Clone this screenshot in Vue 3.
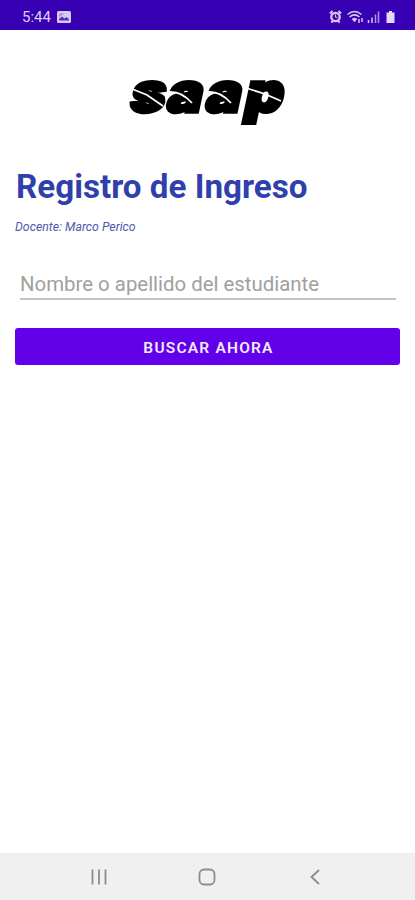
<script setup>
import { ref } from 'vue'

const time = ref('5:44')
const teacher = ref('Marco Perico')
const search = ref('')
</script>

<template>
  <div class="screen">
    <header class="statusbar">
      <span class="time">{{ time }}</span>
      <svg class="picture" width="14" height="12" viewBox="0 0 14 12">
        <rect width="14" height="12" rx="1.500" fill="#d9c9f4" />
        <path d="M2 9.500V8l3-2.500 2.500 2L9.500 6 12 8.200v1.300z" fill="#5a2fc0" />
        <path d="M2 2.500h6L5 4 2 6z" fill="#8a69d6" opacity=".6" />
      </svg>
      <svg class="status-icons" width="70" height="16" viewBox="0 0 70 16">
        <g fill="none" stroke="#d6c8f2">
          <circle cx="6.500" cy="8" r="4.200" stroke-width="2.300" />
          <path d="M1 4.500L3.500 2M12 4.500L9.500 2M2.300 13.500l1.500-1.500M10.700 13.500L9.200 12" stroke-width="2" />
          <path d="M6.500 5.500V8.300h2" stroke-width="1" />
          <path d="M18.500 5.500q7-6 14 0M20.500 8q5-4.200 10 0" stroke-width="1.500" />
          <path d="M23 10q2.500-2 5 0l-2.500 3z" fill="#d6c8f2" stroke-width=".5" />
          <path d="M30 10v4M33 9v4" stroke-width="1.500" />
          <path d="M39.500 11v3M43 8.500v5.500" stroke-width="1.500" />
          <path d="M46.500 5.500V14M49.500 2.500V14" stroke-width="1.500" opacity=".75" />
        </g>
        <path d="M57.500 3.500h2.500V2h3v1.500h2.500V14h-8z" fill="#e4daf7" />
      </svg>
    </header>

    <main class="content">
      <svg class="logo" width="160" height="54" viewBox="0 0 160 54">
        <g transform="translate(1 37.500) skewX(-12) scale(1.08 1)">
          <text class="logo-text" x="0 34 70 106" y="0">saap</text>
        </g>
        <g class="cuts">
          <path d="M4 14.500L20 21l16 11" />
          <path d="M42 18q12-1 23 11" />
          <path d="M81 18q12-1 23 11" />
          <path d="M119 14l19 6 16 7" />
        </g>
      </svg>

      <h1 class="title">Registro de Ingreso</h1>
      <p class="teacher">Docente: {{ teacher }}</p>
      <input v-model="search" class="search" type="text" placeholder="Nombre o apellido del estudiante">
      <button class="searchbtn">BUSCAR AHORA</button>
    </main>

    <footer class="navbar">
      <svg width="16" height="16" viewBox="0 0 16 16">
        <path d="M1.500 .5v15M8 .5v15M14.500 .5v15" />
      </svg>
      <svg width="18" height="18" viewBox="0 0 18 18">
        <rect x="1.500" y="1.500" width="15" height="15" rx="4.500" />
      </svg>
      <svg width="16" height="16" viewBox="0 0 16 16">
        <path d="M12 1L4.500 8l7.500 7" />
      </svg>
    </footer>
  </div>
</template>

<style>
body {
  margin: 0;
}
</style>

<style scoped>
.screen {
  display: flex;
  flex-direction: column;
  height: 900px;
  background: #fff;
  font-family: Roboto, "Liberation Sans", sans-serif;
}
.statusbar {
  display: flex;
  align-items: center;
  box-sizing: border-box;
  height: 30px;
  padding: 3px 16px 0 22px;
  background: #3700b3;
}
.time {
  width: 35px;
  color: #dccff5;
  font-size: 15px;
}
.status-icons {
  margin-left: auto;
}
.content {
  display: flex;
  flex: 1;
  flex-direction: column;
  padding: 44px 15px 0;
}
.logo {
  align-self: center;
  margin-right: 1px;
  overflow: visible;
}
.logo-text {
  font-family: Inter, sans-serif;
  font-size: 55px;
  font-weight: 900;
  stroke: #000;
  stroke-width: 3.4;
}
.cuts {
  fill: none;
  stroke: #fff;
  stroke-width: 1.8;
}
.title {
  margin: 38px 0 0;
  padding-left: 1px;
  color: #303fac;
  font-size: 33.2px;
  font-weight: 700;
  line-height: 41px;
  white-space: nowrap;
}
.teacher {
  margin: 12px 0 0;
  color: #5058a8;
  font-size: 12.3px;
  font-style: italic;
  line-height: 16px;
}
.search {
  box-sizing: border-box;
  height: 34px;
  margin: 31px 4px 0 5px;
  padding: 4px 0 0;
  border: 0;
  border-bottom: 2px solid #c4c4c4;
  outline: none;
  background: none;
  font-family: inherit;
  font-size: 20.4px;
}
.search::placeholder {
  color: #a0a0a0;
  opacity: 1;
}
.searchbtn {
  height: 37px;
  margin-top: 28px;
  padding: 2px 0 0 2px;
  border: 0;
  border-radius: 3px;
  background: #6200ea;
  color: #f3eafd;
  font-family: inherit;
  font-size: 15.5px;
  font-weight: 600;
  letter-spacing: 1.2px;
}
.navbar {
  display: flex;
  align-items: center;
  justify-content: space-between;
  box-sizing: border-box;
  height: 47px;
  padding: 1px 92px 0 91px;
  background: #f0f0f0;
}
.navbar svg {
  fill: none;
  stroke: #8c8c8c;
  stroke-width: 1.8;
}
</style>
